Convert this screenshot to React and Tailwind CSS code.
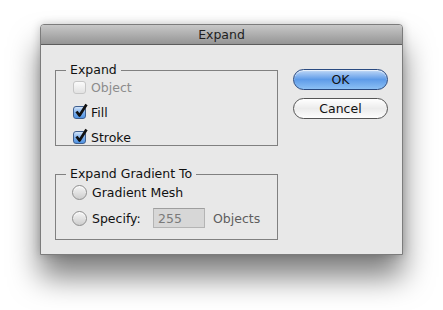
import React from "react";

const Checkbox = ({ label, checked, disabled }) => (
  <label className="flex h-[16px] items-center gap-[5px]">
    <span
      className={
        checked
          ? "relative h-[13px] w-[13px] rounded-[3px] border border-[#3f5f8f] bg-gradient-to-b from-[#d2e4f9] via-[#7fb0ec] to-[#4f93e2]"
          : "relative h-[13px] w-[13px] rounded-[3px] border border-[#c6c6c6] bg-gradient-to-b from-[#fbfbfb] to-[#e2e2e2]"
      }
    >
      {checked && (
        <svg className="absolute -top-[4px] left-[0px]" width="14" height="15" viewBox="0 0 14 15">
          <path d="M2.5 8.5 L5.5 12.5 L12.5 1.5" fill="none" stroke="#111" strokeWidth="2.7" strokeLinejoin="round" />
        </svg>
      )}
    </span>
    <span className={disabled ? "text-[#8c8c8c]" : "text-[#111]"}>{label}</span>
  </label>
);

const Radio = () => (
  <span className="h-[15px] w-[15px] shrink-0 rounded-full border border-[#8e8e8e] bg-gradient-to-b from-[#f6f6f6] to-[#cdcdcd] shadow-[inset_0_1px_1px_rgba(255,255,255,0.9)]" />
);

export default function App() {
  return (
    <div className="h-screen w-full bg-white pl-[40px] pt-[24px] font-['DejaVu_Sans',sans-serif] text-[12.5px] leading-[15px] text-[#111]">
      <div className="flex h-[231px] w-[363px] flex-col overflow-hidden rounded-t-[4px] border border-[#7c7c7c] bg-[#e8e8e8] shadow-[0_22px_30px_rgba(0,0,0,0.5),0_0_10px_rgba(0,0,0,0.2)]">
        {/* title bar */}
        <div className="flex h-[20px] shrink-0 items-center justify-center border-b border-[#5c5c5c] bg-gradient-to-b from-[#c8c8c8] to-[#959595] text-[#1e1e1e]">
          Expand
        </div>

        <div className="flex pl-[14px] pt-[19px]">
          {/* left column */}
          <div className="flex w-[223px] flex-col gap-[22px]">
            <fieldset className="border border-[#808080]">
              <legend className="ml-[10px] px-[4px] leading-[12px]">Expand</legend>
              <div className="flex flex-col gap-[9px] pl-[17px] pt-[3px]">
                <Checkbox label="Object" disabled />
                <Checkbox label="Fill" checked />
                <Checkbox label="Stroke" checked />
              </div>
            </fieldset>

            <fieldset className="border border-[#808080]">
              <legend className="ml-[10px] px-[4px] leading-[12px]">Expand Gradient To</legend>
              <div className="flex flex-col gap-[8px] pb-[11px] pl-[16px] pt-[4px]">
                <label className="flex h-[16px] items-center gap-[5px]">
                  <Radio />
                  <span>Gradient Mesh</span>
                </label>
                <label className="flex h-[20px] items-center">
                  <Radio />
                  <span className="ml-[5px] w-[61px]">Specify:</span>
                  <span className="flex h-[20px] w-[52px] items-center border border-[#b4b4b4] border-t-[#9e9e9e] bg-[#d7d7d7] pl-[4px] text-[#7a7a7a]">
                    255
                  </span>
                  <span className="ml-[8px] text-[#5e5e5e]">Objects</span>
                </label>
              </div>
            </fieldset>
          </div>

          {/* buttons */}
          <div className="ml-[15px] flex w-[95px] flex-col gap-[8px] pt-[5px]">
            <button className="h-[21px] rounded-full border border-[#2a4a80] bg-gradient-to-b from-[#c0d8f6] via-[#5e9be8] to-[#8cc0f4] text-[#111] shadow-[inset_0_1px_1px_rgba(255,255,255,0.7)]">
              OK
            </button>
            <button className="h-[21px] rounded-full border border-[#555] bg-gradient-to-b from-[#ffffff] via-[#ececec] to-[#fdfdfd] text-[#111]">
              Cancel
            </button>
          </div>
        </div>
      </div>
    </div>
  );
}
